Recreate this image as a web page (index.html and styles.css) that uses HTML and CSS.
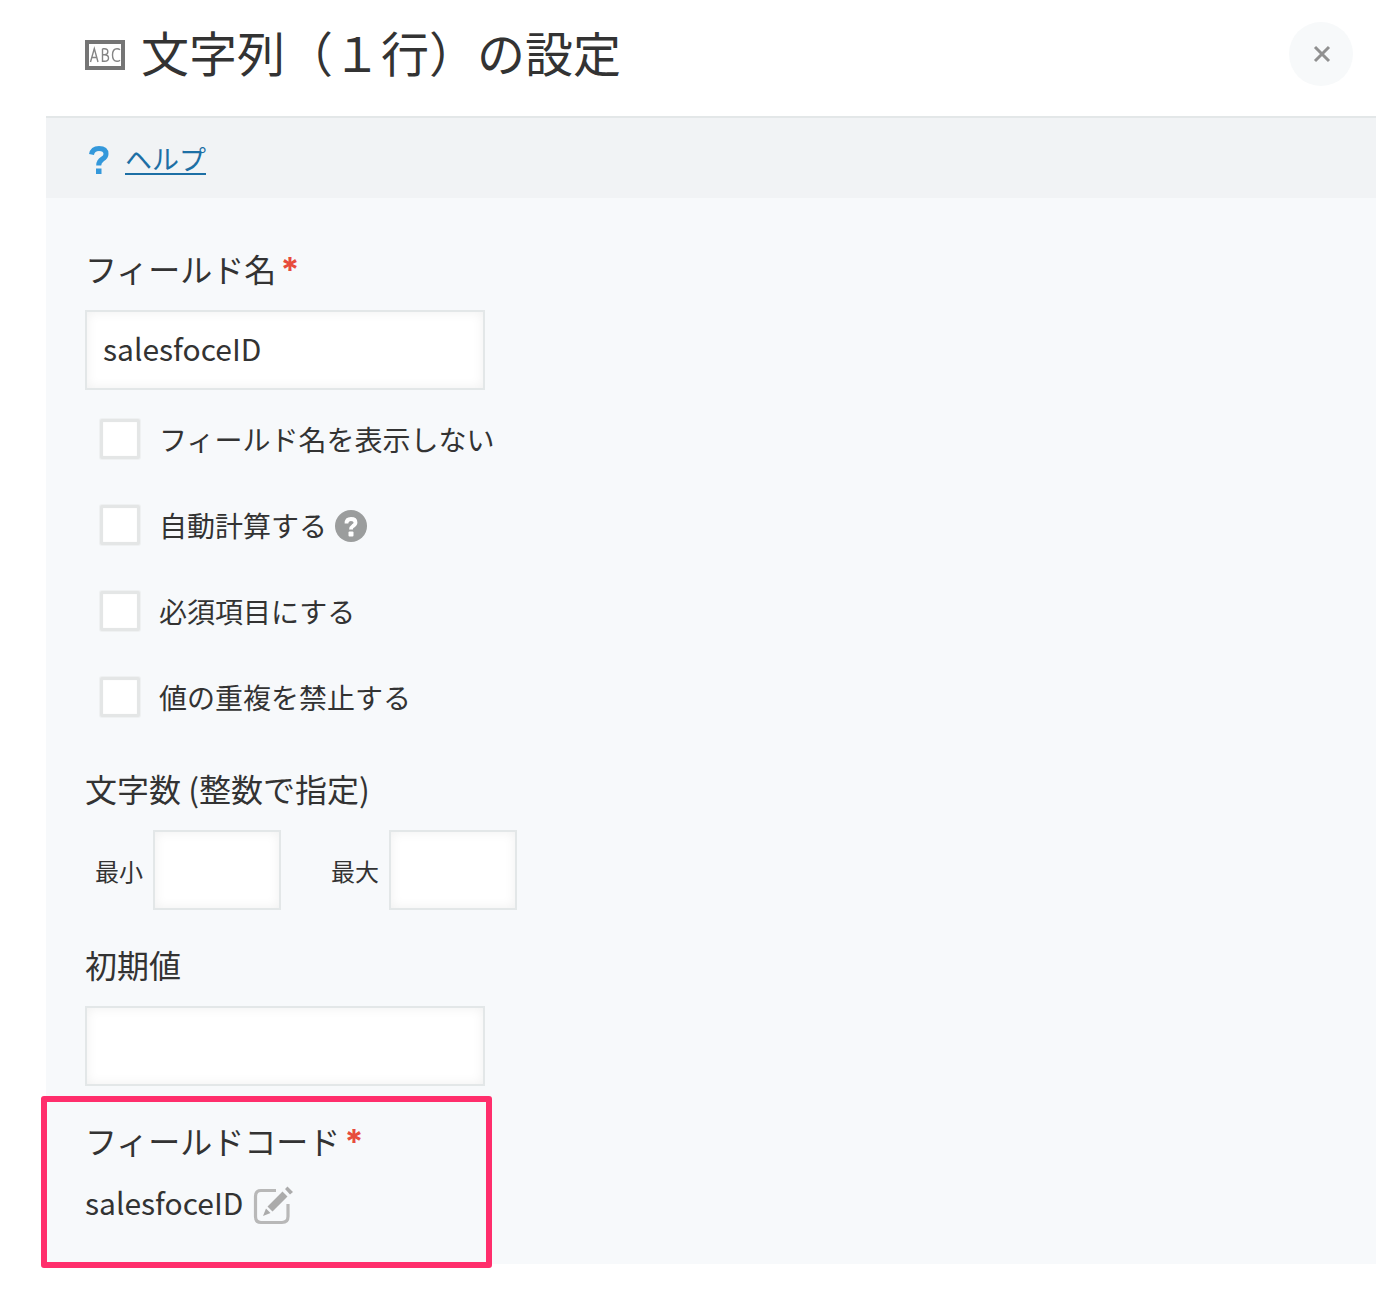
FILE: index.html
```html
<!DOCTYPE html>
<html lang="ja">
<head>
<meta charset="utf-8">
<meta name="viewport" content="width=device-width, initial-scale=1">
<title>文字列（１行）の設定</title>
<link rel="stylesheet" href="styles.css">
</head>
<body>
<main class="dialog">
  <header class="dialog-header">
    <svg class="type-icon" viewBox="0 0 40 30" aria-hidden="true">
      <rect x="2" y="2" width="36" height="26" fill="#fff" stroke="#757575" stroke-width="4"/>
      <g fill="none" stroke="#858585" stroke-width="1.400">
        <path d="M5.500 22L9.300 8.500L13 22M6.900 17.500H11.700"/>
        <path d="M17.500 8.700V21.300H19.500Q23.500 21.300 23.500 18Q23.500 14.700 19.500 14.700H17.500M19.500 14.700Q22.800 14.500 22.800 11.700Q22.800 8.700 19.500 8.700H17.500"/>
        <path d="M35 9.800Q33.800 8.700 32 8.700Q27.500 8.700 27.500 15Q27.500 21.300 32 21.300Q33.800 21.300 35 20.200"/>
      </g>
    </svg>
    <h1 class="dialog-title">文字列（１行）の設定</h1>
    <button class="close-button" type="button" aria-label="閉じる">
      <svg class="close-icon" viewBox="0 0 20 18" aria-hidden="true"><path d="M4 2L18 16M18 2L4 16" fill="none" stroke="#909090" stroke-width="3"/></svg>
    </button>
  </header>
  <div class="help-bar">
    <svg class="help-mark" viewBox="0 0 20 28" aria-hidden="true">
      <path d="M2.500 8.500Q3.500 2.500 10 2.500Q17 2.500 17 8Q17 11 13.500 13Q9.700 15.300 9.700 19.500" fill="none" stroke="#3498db" stroke-width="5"/>
      <rect x="7" y="22.500" width="5.500" height="5.500" fill="#3498db"/>
    </svg>
    <a class="help-link" href="#">ヘルプ</a>
  </div>
  <form class="settings">
    <section class="group">
      <label class="label" for="field-name">フィールド名<span class="required">*</span></label>
      <input class="text-input" id="field-name" type="text" value="salesfoceID">
      <div class="options">
        <label class="option"><input class="checkbox" type="checkbox"><span class="option-text">フィールド名を表示しない</span></label>
        <div class="option">
          <input class="checkbox" type="checkbox" id="auto-calc"><label class="option-text" for="auto-calc">自動計算する</label>
          <button class="tip-button" type="button" aria-label="自動計算の説明">
            <svg viewBox="0 0 32 32" width="32" height="32" aria-hidden="true">
              <circle cx="16" cy="16" r="16" fill="#9b9d9d"/>
              <path d="M11.500 13.500Q11.500 9 16 9Q20.500 9 20.500 12.500Q20.500 14.500 18 16Q16 17.300 16 19.500" fill="none" stroke="#fff" stroke-width="3.800"/>
              <rect x="13.500" y="21.500" width="5" height="5" rx="1" fill="#fff"/>
            </svg>
          </button>
        </div>
        <label class="option"><input class="checkbox" type="checkbox"><span class="option-text">必須項目にする</span></label>
        <label class="option"><input class="checkbox" type="checkbox"><span class="option-text">値の重複を禁止する</span></label>
      </div>
    </section>
    <fieldset class="group group-length">
      <legend class="label">文字数 (整数で指定)</legend>
      <div class="range">
        <label class="range-item"><span class="range-text">最小</span><input class="text-input short" type="text"></label>
        <label class="range-item"><span class="range-text">最大</span><input class="text-input short" type="text"></label>
      </div>
    </fieldset>
    <section class="group">
      <label class="label" for="default-value">初期値</label>
      <input class="text-input" id="default-value" type="text">
    </section>
    <section class="group highlighted">
      <h2 class="label">フィールドコード<span class="required">*</span></h2>
      <div class="code-row">
        <span class="code-value">salesfoceID</span>
        <button class="edit-button" type="button" aria-label="編集">
          <svg viewBox="0 0 40 40" width="40" height="40" aria-hidden="true">
            <path d="M23 4.500H8Q2.500 4.500 2.500 10.500V30.500Q2.500 36.500 8 36.500H29Q35 36.500 35 30.500V18" fill="none" stroke="#b8b8b8" stroke-width="3.200"/>
            <path d="M10 30L13 22.500L17.500 27Z M14.500 20.500L29.500 5.500L34.500 10.500L19.500 25.500Z M32 3L34.500 .5L40 6L37 8.500Z" fill="#ababab"/>
          </svg>
        </button>
      </div>
    </section>
  </form>
</main>
</body>
</html>
```
FILE: styles.css
```css
*,
*::before,
*::after {
  box-sizing: border-box;
}

body {
  margin: 0;
  background: #fff;
  color: #333;
  font-family: "Noto Sans CJK JP", sans-serif;
}

button {
  padding: 0;
  border: 0;
  background: none;
  cursor: pointer;
}

svg {
  display: block;
}

.dialog {
  margin: 0 0 46px 46px;
}

.dialog-header {
  display: flex;
  align-items: center;
  height: 118px;
  padding: 0 23px 8px 39px;
  border-bottom: 2px solid #e3e7e8;
}

.type-icon {
  width: 40px;
  height: 30px;
  margin: 2px 16px 0 0;
}

.dialog-title {
  flex: 1;
  margin: 0;
  padding-bottom: 6px;
  font-size: 48px;
  font-weight: 400;
  line-height: 72px;
}

.close-button {
  display: grid;
  place-items: center;
  width: 64px;
  height: 64px;
  border-radius: 50%;
  background: #f7f9fa;
}

.close-icon {
  width: 20px;
  height: 18px;
}

.help-bar {
  display: flex;
  align-items: center;
  gap: 16px;
  height: 80px;
  padding: 4px 43px 0;
  background: #f1f3f5;
}

.help-mark {
  width: 20px;
  height: 28px;
}

.help-link {
  height: 30px;
  border-bottom: 2px solid #1d6fa5;
  color: #1d6fa5;
  font-size: 27px;
  line-height: 28px;
  text-decoration: none;
}

.settings {
  display: flex;
  flex-direction: column;
  gap: 32px;
  padding: 48px 39px 38px;
  background: #f7f9fb;
}

.group {
  display: flex;
  flex-direction: column;
  align-items: flex-start;
  min-width: 0;
  margin: 0;
  padding: 0;
  border: 0;
}

.group-length {
  margin-top: 16px;
}

.label {
  display: block;
  margin: 0 0 20px;
  padding: 0;
  font-size: 32px;
  font-weight: 400;
  line-height: 44px;
}

.required {
  margin-left: 4px;
  color: #e74c3c;
  font-family: Inter, "Noto Sans CJK JP", sans-serif;
  font-size: 34px;
  font-weight: 700;
  line-height: 1;
}

.text-input {
  width: 400px;
  max-width: 100%;
  height: 80px;
  padding: 0 16px 4px;
  border: 2px solid #e3e7e8;
  border-radius: 0;
  background: #fff;
  box-shadow: inset 0 0 12px #f0f0f0;
  color: #333;
  font-family: inherit;
  font-size: 30px;
}

.short {
  width: 128px;
}

.options {
  display: flex;
  flex-direction: column;
  gap: 44px;
  margin-top: 28px;
  padding-left: 14px;
}

.option {
  display: flex;
  align-items: center;
  height: 42px;
}

.checkbox {
  appearance: none;
  width: 40px;
  height: 40px;
  margin: 1px 19px 1px 1px;
  border: 3px solid #e4e6e6;
  border-radius: 2px;
  background: #fff;
  box-shadow: 0 0 0 1px #eff1f2, inset 0 0 1px #e4e6e6;
}

.checkbox:checked {
  background: #3498db;
}

.option-text {
  font-size: 28px;
  line-height: 42px;
}

.tip-button {
  margin: 2px 0 0 8px;
}

.range {
  display: flex;
  gap: 50px;
  padding-left: 10px;
}

.range-item {
  display: flex;
  align-items: center;
  gap: 10px;
}

.range-text {
  font-size: 24px;
}

.highlighted {
  position: relative;
}

/* callout frame drawn around the field code */
.highlighted::after {
  content: "";
  position: absolute;
  top: -22px;
  left: -44px;
  width: 451px;
  bottom: -42px;
  border: 6px solid #ff2e6c;
  border-radius: 3px;
  pointer-events: none;
}

.code-row {
  display: flex;
  align-items: flex-end;
  gap: 10px;
  height: 44px;
}

.code-value {
  font-size: 30px;
  line-height: 48px;
}
```
